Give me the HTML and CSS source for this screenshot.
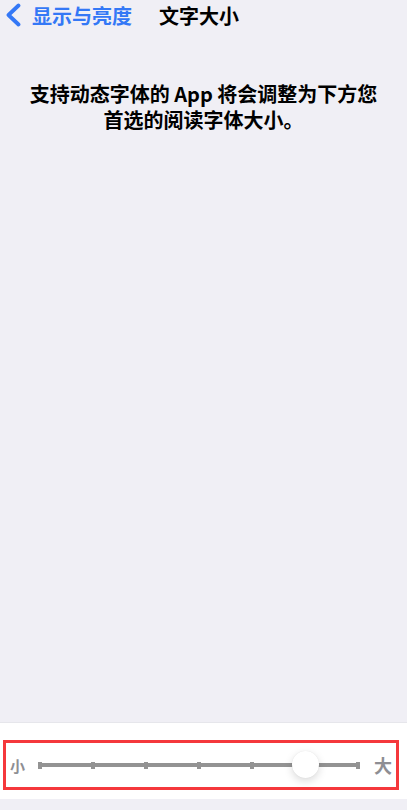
FILE: index.html
```html
<!DOCTYPE html>
<html lang="zh-cn">
<head>
    <meta charset="UTF-8">
    <title>文字大小</title>
    <link rel="stylesheet" href="styles.css">
</head>
<body>

    <div id="page">
        <!--顶部导航-->
        <div class="nav">
            <a class="back">
                <svg class="chevron" width="16" height="24" viewBox="0 0 16 24">
                    <path d="M13.5 2.5 L3.5 12 L13.5 21.5" fill="none" stroke="#3478f6" stroke-width="3.8" stroke-linecap="round" stroke-linejoin="round"/>
                </svg>
                <span>显示与亮度</span>
            </a>
            <h1 class="title">文字大小</h1>
        </div>

        <!--说明文字-->
        <p class="desc">支持动态字体的 App 将会调整为下方您首选的阅读字体大小。</p>

        <!--字号滑块-->
        <div class="panel">
            <div class="scale">
                <span class="small">小</span>
                <div class="track">
                    <i></i><i></i><i></i><i></i><i></i><i></i><i></i>
                    <div class="thumb" style="left: 83.333%"></div>
                </div>
                <span class="large">大</span>
            </div>
        </div>
    </div>

</body>
</html>
```

FILE: styles.css
```css
body{margin:0;font-family: "Noto Sans CJK SC","Noto Sans",sans-serif;background-color:#f0eff5;}
h1,p{margin:0;}

#page{
    display: flex;
    flex-direction: column;
    min-height: 810px;
}

.nav{
    display: flex;
    align-items: center;
    height: 30px;
}
.nav .back{
    display: flex;
    align-items: center;
    color: #3478f6;
    font-size: 20px;
    font-weight: 700;
}
.nav .chevron{
    display: block;
    margin: 0 11px 0 5px;
}
.nav .title{
    margin-left: 27px;
    font-size: 20px;
    font-weight: 700;
    color: #000;
}

.desc{
    margin-top: 51px;
    padding: 0 26px;
    font-size: 20px;
    line-height: 26px;
    font-weight: 700;
    text-align: center;
    color: #000;
}

.panel{
    margin-top: auto;
    margin-bottom: 11px;
    height: 77px;
    box-sizing: border-box;
    padding: 17px 8px 0 3px;
    background-color: #fff;
    border-top: 1px solid #e6e6eb;
}
.scale{
    display: flex;
    align-items: center;
    height: 50px;
    box-sizing: border-box;
    border: 3px solid #f5383c;
    color: #8e8e93;
    font-weight: 700;
}
.scale .small{
    width: 16px;
    margin-left: 4px;
    font-size: 15px;
}
.scale .large{
    margin-left: 14px;
    font-size: 18px;
}
.track{
    position: relative;
    display: flex;
    justify-content: space-between;
    align-items: center;
    width: 322px;
    height: 8px;
    margin-left: 12px;
    background: linear-gradient(#939393,#939393) center / 100% 4px no-repeat;
}
.track i{
    width: 4px;
    height: 7px;
    background-color: #939393;
}
.track .thumb{
    position: absolute;
    top: 50%;
    width: 27px;
    height: 27px;
    margin: -14px 0 0 -14px;
    border-radius: 50%;
    background-color: #fff;
    box-shadow: 0 3px 8px rgba(0,0,0,.15), 0 0 1px rgba(0,0,0,.1);
}
```
